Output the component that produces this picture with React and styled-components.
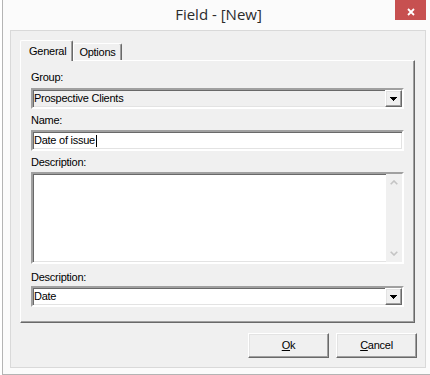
import React from 'react'
import styled, { createGlobalStyle, css } from 'styled-components'

const GlobalStyle = createGlobalStyle`
  html,
  body {
    margin: 0;
    padding: 0;
    background: #fff;
    overflow: hidden;
  }
  body {
    font-family: "Liberation Sans", Arial, sans-serif;
    font-size: 11px;
    letter-spacing: -0.25px;
    color: #000;
  }
`

const sunken = css`
  box-sizing: border-box;
  border: 2px solid;
  border-color: #a0a0a0 #fff #fff #a0a0a0;
  box-shadow: inset 1px 1px #696969, inset -1px -1px #e3e3e3;
`

const raised = css`
  box-sizing: border-box;
  background: #f0f0f0;
  border: 1px solid;
  border-color: #fff #696969 #696969 #fff;
  box-shadow: inset -1px -1px #a0a0a0, inset 1px 1px #e3e3e3;
`

const Window = styled.div`
  margin-left: 2px;
  width: 432px;
  height: 375px;
  box-sizing: border-box;
  border-left: 1px solid #b4b4b4;
  border-bottom: 1px solid #b4b4b4;
  background: #fbfbfb;
  display: flex;
  flex-direction: column;
`

const TitleBar = styled.div`
  display: grid;
  grid-template-columns: 1fr auto 1fr;
  height: 30px;
  flex-shrink: 0;
`

const Title = styled.div`
  grid-column: 2;
  font-family: "Open Sans", "Noto Sans", sans-serif;
  font-size: 15px;
  letter-spacing: 0;
  line-height: 29px;
  color: #2b2b2b;
`

const CloseButton = styled.div`
  grid-column: 3;
  justify-self: end;
  margin-right: 8px;
  width: 31px;
  height: 20px;
  box-sizing: border-box;
  padding-top: 3px;
  background: #c75050;
  display: flex;
  align-items: center;
  justify-content: center;
`

const Client = styled.div`
  flex: 1;
  margin: 0 8px 6px 7px;
  border: 1px solid #d9d9d9;
  background: #f0f0f0;
  padding: 9px 10px 9px 9px;
  display: flex;
  flex-direction: column;
`

const TabStrip = styled.div`
  display: flex;
  align-items: flex-end;
  height: 20px;
  flex-shrink: 0;
`

const Tab = styled.div`
  position: relative;
  z-index: ${props => (props.$active ? 1 : 0)};
  box-sizing: border-box;
  height: ${props => (props.$active ? 21 : 17)}px;
  margin-bottom: ${props => (props.$active ? -1 : 0)}px;
  padding: ${props => (props.$active ? '4px 6px 0 8px' : '2px 5px 0 5px')};
  line-height: 13px;
  background: #f0f0f0;
  border-top: 1px solid #fff;
  border-left: 1px solid #fff;
  border-right: 1px solid #696969;
  border-radius: 2px 2px 0 0;
  box-shadow: inset -1px 0 #a0a0a0;
`

const Panel = styled.div`
  box-sizing: border-box;
  height: 263px;
  flex-shrink: 0;
  background: #f0f0f0;
  border-top: 1px solid #fff;
  border-left: 1px solid #fff;
  border-right: 1px solid #696969;
  border-bottom: 1px solid #696969;
  box-shadow: inset -1px -1px #a0a0a0;
  padding: 9px 10px 0 10px;
  display: flex;
  flex-direction: column;
`

const Label = styled.div`
  line-height: 14px;
  margin-top: ${props => props.$mt}px;
  margin-bottom: ${props => props.$mb}px;
`

const Combo = styled.div`
  ${sunken};
  height: 21px;
  display: flex;
  align-items: center;
  background: ${props => props.$bg};
  padding-left: 1px;
`

const FieldText = styled.span`
  flex: 1;
  display: flex;
  align-items: center;
  line-height: 17px;
`

const Caret = styled.span`
  width: 1px;
  height: 12px;
  margin-left: 1px;
  background: #000;
`

const DropButton = styled.div`
  ${raised};
  width: 17px;
  height: 17px;
  display: flex;
  align-items: center;
  justify-content: center;
`

const Memo = styled.div`
  ${sunken};
  height: 92px;
  background: #fff;
  display: flex;
  justify-content: flex-end;
`

const ScrollBar = styled.div`
  width: 16px;
  background: #f0f0f0;
  display: flex;
  flex-direction: column;
  justify-content: space-between;
`

const ScrollArrow = styled.div`
  height: 17px;
  display: flex;
  align-items: center;
  justify-content: center;
`

const ButtonRow = styled.div`
  display: flex;
  justify-content: flex-end;
  gap: 7px;
  margin-top: 10px;
  margin-right: -2px;
`

const Button = styled.div`
  ${raised};
  width: 81px;
  height: 25px;
  display: flex;
  align-items: center;
  justify-content: center;
  line-height: 13px;
`

const DownArrow = () => (
  <svg width="7" height="4" viewBox="0 0 7 4" shapeRendering="crispEdges">
    <path d="M0 0h7v1H0zM1 1h5v1H1zM2 2h3v1H2zM3 3h1v1H3z" fill="#000" />
  </svg>
)

const Chevron = ({ up }) => (
  <svg width="8" height="5" viewBox="0 0 8 5">
    <path
      d={up ? 'M0.7 4.3 4 1 7.3 4.3' : 'M0.7 0.7 4 4 7.3 0.7'}
      fill="none"
      stroke="#c4c4c4"
      strokeWidth="1.6"
    />
  </svg>
)

const ComboBox = ({ value, bg }) => (
  <Combo $bg={bg}>
    <FieldText>{value}</FieldText>
    <DropButton>
      <DownArrow />
    </DropButton>
  </Combo>
)

export default function App() {
  return (
    <>
      <GlobalStyle />
      <Window>
        <TitleBar>
          <Title>Field - [New]</Title>
          <CloseButton>
            <svg width="8" height="8" viewBox="0 0 8 8">
              <path d="M1 1 7 7M7 1 1 7" stroke="#fff" strokeWidth="1.8" />
            </svg>
          </CloseButton>
        </TitleBar>

        <Client>
          <TabStrip>
            <Tab $active>General</Tab>
            <Tab>Options</Tab>
          </TabStrip>

          <Panel>
            <Label $mt={0} $mb={4}>Group:</Label>
            <ComboBox value="Prospective Clients" bg="#f0f0f0" />

            <Label $mt={4} $mb={3}>Name:</Label>
            <Combo $bg="#fff">
              <FieldText>
                Date of issue
                <Caret />
              </FieldText>
            </Combo>

            <Label $mt={4} $mb={3}>Description:</Label>
            <Memo>
              <ScrollBar>
                <ScrollArrow>
                  <Chevron up />
                </ScrollArrow>
                <ScrollArrow>
                  <Chevron />
                </ScrollArrow>
              </ScrollBar>
            </Memo>

            <Label $mt={6} $mb={2}>Description:</Label>
            <ComboBox value="Date" bg="#fff" />
          </Panel>

          <ButtonRow>
            <Button>
              <span>
                <u>O</u>k
              </span>
            </Button>
            <Button>
              <span>
                <u>C</u>ancel
              </span>
            </Button>
          </ButtonRow>
        </Client>
      </Window>
    </>
  )
}
